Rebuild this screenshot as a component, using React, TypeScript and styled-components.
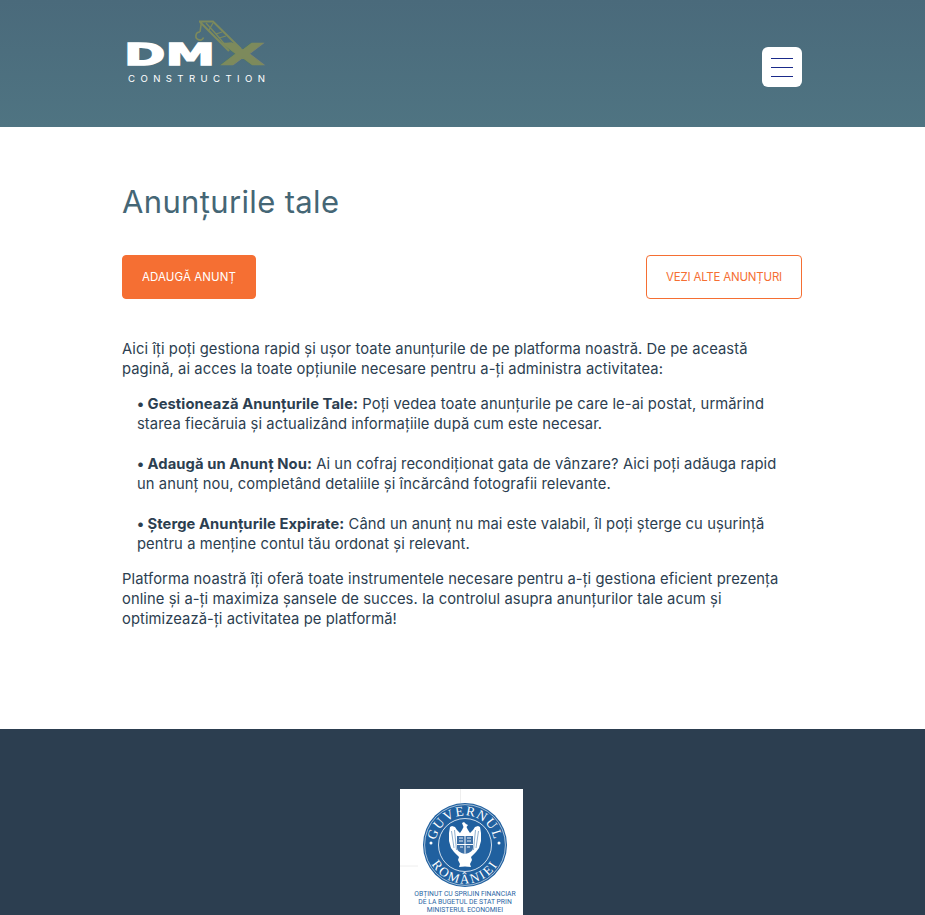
import React from "react";
import styled, { createGlobalStyle } from "styled-components";

const Global = createGlobalStyle`
  html, body { margin: 0; padding: 0; background: #fff; }
  body { font-family: Inter, "Noto Sans", "Liberation Sans", sans-serif; color: #2c3e50; }
`;

const Header = styled.header`
  height: 127px;
  background: linear-gradient(180deg, #4a6a7b 0%, #4f7482 100%);
  display: flex;
  align-items: flex-start;
  justify-content: space-between;
  padding: 0 123px 0 122px;
`;

const Logo = styled.svg`
  display: block;
  width: 150px;
  height: 80px;
  margin-top: 14px;
`;

const MenuButton = styled.button`
  width: 40px;
  height: 40px;
  margin-top: 47px;
  padding: 0 9px;
  border: 0;
  border-radius: 6px;
  background: #fff;
  display: flex;
  flex-direction: column;
  justify-content: center;
  gap: 8px;
`;

const MenuLine = styled.span`
  display: block;
  height: 1px;
  width: 22px;
  background: #1a2a8a;
`;

const Main = styled.main`
  width: 680px;
  margin-left: 122px;
  padding: 52px 0 100px;
`;

const Title = styled.h1`
  margin: 0 0 31px;
  font-size: 31px;
  line-height: 45px;
  font-weight: 400;
  color: #456675;
  letter-spacing: 0.35px;
`;

const Actions = styled.div`
  display: flex;
  justify-content: space-between;
  margin-bottom: 40px;
`;

const ActionButton = styled.a<{ $outline?: boolean }>`
  box-sizing: border-box;
  height: 44px;
  display: flex;
  align-items: center;
  justify-content: center;
  width: ${(p) => (p.$outline ? "156px" : "134px")};
  border-radius: 4px;
  font-size: 11.5px;
  font-weight: 400;
  letter-spacing: ${(p) => (p.$outline ? "-0.2px" : "0.1px")};
  border: 1px solid #f56f33;
  background: ${(p) => (p.$outline ? "#fff" : "#f56f33")};
  color: ${(p) => (p.$outline ? "#f56f33" : "#fff")};
`;

const Para = styled.p`
  margin: 0;
  font-size: 14.75px;
  line-height: 20px;
  letter-spacing: 0.08px;
  white-space: nowrap;
`;

const List = styled.ul`
  list-style: none;
  margin: 15px 0;
  padding: 0 0 0 15px;
  display: flex;
  flex-direction: column;
  gap: 20px;
`;

const Item = styled.li`
  font-size: 14.75px;
  line-height: 20px;
  letter-spacing: 0.08px;
  white-space: nowrap;
  b { font-weight: 700; }
`;

const Bullet = styled.span`
  display: inline-block;
  width: 10.5px;
  font-weight: 700;
`;

const Footer = styled.footer`
  background: #2c3e50;
  height: 186px;
  display: flex;
  justify-content: center;
  padding-top: 60px;
  box-sizing: border-box;
`;

const Badge = styled.div`
  width: 123px;
  height: 126px;
  background: #fff;
  margin-right: 2px;
`;

const BadgeSvg = styled.svg`
  display: block;
  width: 123px;
  height: 126px;
`;

const olive = "#7d8a5c";
const blue = "#20609f";

export default function App() {
  return (
    <>
      <Global />
      <Header>
        <Logo viewBox="122 14 150 80">
          <g stroke={olive} fill="none">
            <path d="M199 21.5 H213 L241 49" strokeWidth="2" />
            <path d="M200 22 L229 51" strokeWidth="2.2" />
            <path d="M206 23 L216 34 M213 23 L209 30 M216 34 L226 46 M222 32 L216 34 M226 36 L219 38 M232 43 L225 44" strokeWidth="1.3" />
            <path d="M201.5 22 L200 32" strokeWidth="1.6" />
            <path d="M200 32 A4 4 0 1 0 203.6 37.5" strokeWidth="1.6" />
          </g>
          <text x="124" y="64.6" fontFamily="DejaVu Sans" fontWeight="700" fontSize="30" textLength="91" lengthAdjust="spacingAndGlyphs" fill="#fff" stroke="#fff" strokeWidth="1.4">DM</text>
          <text x="220" y="64.6" fontFamily="DejaVu Sans" fontWeight="700" fontSize="30" textLength="45" lengthAdjust="spacingAndGlyphs" fill={olive} stroke={olive} strokeWidth="0.6">X</text>
          <text x="128" y="82" fontFamily="Inter, sans-serif" fontSize="9.6" textLength="137" fill="#fff">CONSTRUCTION</text>
        </Logo>
        <MenuButton aria-label="Meniu">
          <MenuLine />
          <MenuLine />
          <MenuLine />
        </MenuButton>
      </Header>
      <Main>
        <Title>Anunțurile tale</Title>
        <Actions>
          <ActionButton>ADAUGĂ ANUNȚ</ActionButton>
          <ActionButton $outline>VEZI ALTE ANUNȚURI</ActionButton>
        </Actions>
        <Para>
          Aici îți poți gestiona rapid și ușor toate anunțurile de pe platforma noastră. De pe această
          <br />
          pagină, ai acces la toate opțiunile necesare pentru a-ți administra activitatea:
        </Para>
        <List>
          <Item>
            <Bullet>•</Bullet><b>Gestionează Anunțurile Tale:</b> Poți vedea toate anunțurile pe care le-ai postat, urmărind
            <br />
            starea fiecăruia și actualizând informațiile după cum este necesar.
          </Item>
          <Item>
            <Bullet>•</Bullet><b>Adaugă un Anunț Nou:</b> Ai un cofraj recondiționat gata de vânzare? Aici poți adăuga rapid
            <br />
            un anunț nou, completând detaliile și încărcând fotografii relevante.
          </Item>
          <Item>
            <Bullet>•</Bullet><b>Șterge Anunțurile Expirate:</b> Când un anunț nu mai este valabil, îl poți șterge cu ușurință
            <br />
            pentru a menține contul tău ordonat și relevant.
          </Item>
        </List>
        <Para>
          Platforma noastră îți oferă toate instrumentele necesare pentru a-ți gestiona eficient prezența
          <br />
          online și a-ți maximiza șansele de succes. Ia controlul asupra anunțurilor tale acum și
          <br />
          optimizează-ți activitatea pe platformă!
        </Para>
      </Main>
      <Footer>
        <Badge>
          <BadgeSvg viewBox="0 0 123 126">
            <defs>
              <path id="arcTop" d="M35.5 56 A29.5 29.5 0 0 1 94.5 56" />
              <path id="arcBottom" d="M26.5 56 A38.5 38.5 0 0 0 103.5 56" />
            </defs>
            <path d="M60.5 0 V14 M0 77 H18" stroke="#eeeeee" strokeWidth="1" />
            <circle cx="65" cy="56" r="42" fill={blue} />
            <circle cx="65" cy="56" r="40.4" fill="none" stroke="#fff" strokeWidth="0.6" />
            <circle cx="65" cy="56" r="26.5" fill="none" stroke="#fff" strokeWidth="0.8" />
            <text fontFamily="Liberation Serif" fontSize="13.4" letterSpacing="1.2" fill="#fff">
              <textPath href="#arcTop" startOffset="50%" textAnchor="middle">GUVERNUL</textPath>
            </text>
            <text fontFamily="Liberation Serif" fontSize="13" letterSpacing="2" fill="#fff">
              <textPath href="#arcBottom" startOffset="50%" textAnchor="middle">ROMÂNIEI</textPath>
            </text>
            <circle cx="31" cy="54" r="1.5" fill="#fff" />
            <circle cx="99" cy="54" r="1.5" fill="#fff" />
            <path
              d="M62 34 L64 33 L66 35 L68 36 L66.5 38 L68 41 L70 44 L73 41 L75 38 L78 37 L80 38 L81 44 L81 52 L79 59 L76 63 L73 66 L71 68 L72 71 L70 75 L71 78 L65 77.5 L59 78 L60 75 L58 71 L59 68 L57 66 L54 63 L51 59 L49 52 L49 44 L50 38 L52 37 L55 38 L57 41 L60 44 L62 41 L63.5 38 Z"
              fill="#fff"
            />
            <path d="M51.5 42 L54 59 M54.5 41 L56.5 61 M78.5 42 L76 59 M75.5 41 L73.5 61" stroke={blue} strokeWidth="0.5" />
            <path d="M57 47 H73 V59 Q73 63 65 65 Q57 63 57 59 Z" fill="#3a6ea6" />
            <path d="M65 47 V65 M57 55.5 H73" stroke="#fff" strokeWidth="1" />
            <path d="M59 49 H63 M67 49 H71 M59 52 H63 M67 52 H71 M60 58 H63 M67 58 H70" stroke="#e8eef5" strokeWidth="1.2" />
            <g fontFamily="Roboto, sans-serif" fontSize="6.8" fontWeight="400" fill="#2a65a3" textAnchor="middle">
              <text x="65" y="106.5">OBȚINUT CU SPRIJIN FINANCIAR</text>
              <text x="65" y="114.5">DE LA BUGETUL DE STAT PRIN</text>
              <text x="65" y="123">MINISTERUL ECONOMIEI</text>
            </g>
          </BadgeSvg>
        </Badge>
      </Footer>
    </>
  );
}
